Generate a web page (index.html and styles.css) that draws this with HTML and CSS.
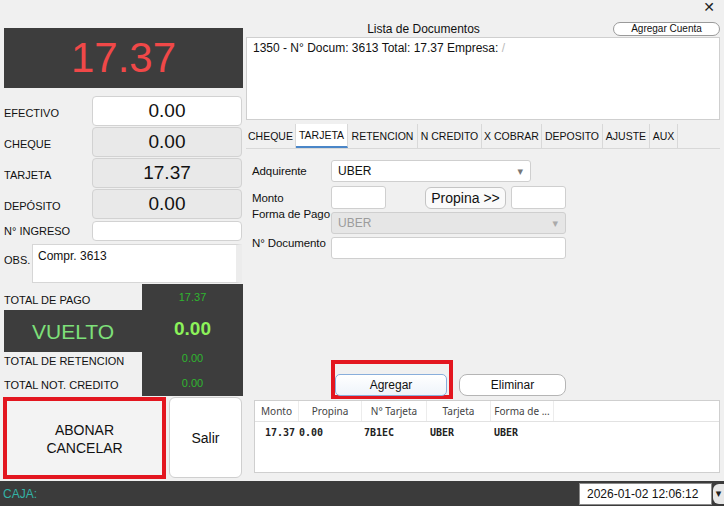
FILE: index.html
```html
<!DOCTYPE html>
<html lang="es">
<head>
<meta charset="utf-8">
<title>Cobro</title>
<link rel="stylesheet" href="styles.css">
</head>
<body>
<div class="app">
  <div class="main">
    <div class="left">
      <div class="amount">17.37</div>
      <div class="rows">
        <div class="row"><span class="lbl">EFECTIVO</span><div class="field white">0.00</div></div>
        <div class="row"><span class="lbl">CHEQUE</span><div class="field">0.00</div></div>
        <div class="row"><span class="lbl">TARJETA</span><div class="field">17.37</div></div>
        <div class="row"><span class="lbl">DEPÓSITO</span><div class="field">0.00</div></div>
        <div class="row small"><span class="lbl">N° INGRESO</span><div class="field white"></div></div>
        <div class="row obs"><span class="lbl obs-lbl">OBS.</span><div class="textarea">Compr. 3613</div></div>
      </div>
      <div class="totals">
        <div class="t-lbl t1">TOTAL DE PAGO</div>
        <div class="t-val t1v">17.37</div>
        <div class="vuelto">VUELTO</div>
        <div class="vuelto-val">0.00</div>
        <div class="t-lbl t3">TOTAL DE RETENCION</div>
        <div class="t-val t3v">0.00</div>
        <div class="t-lbl t4">TOTAL NOT. CREDITO</div>
        <div class="t-val t4v">0.00</div>
      </div>
      <div class="btns">
        <div class="redbox big"><div class="abonar">ABONAR<br>CANCELAR</div></div>
        <div class="salir">Salir</div>
      </div>
    </div>
    <div class="right">
      <div class="titlebar"><span class="close">✕</span></div>
      <div class="listhead">
        <span class="listtitle">Lista de Documentos</span>
        <span class="pill">Agregar Cuenta</span>
      </div>
      <div class="list">1350 - N° Docum: 3613 Total: 17.37 Empresa: <span class="redact">/</span></div>
      <div class="tabs">
        <span class="tab w50">CHEQUE</span>
        <span class="tab w52 active">TARJETA</span>
        <span class="tab w70">RETENCION</span>
        <span class="tab w64">N CREDITO</span>
        <span class="tab w60">X COBRAR</span>
        <span class="tab w61">DEPOSITO</span>
        <span class="tab w47">AJUSTE</span>
        <span class="tab w28">AUX</span>
      </div>
      <div class="form">
        <div class="frow r1"><span class="flbl">Adquirente</span><div class="select s200">UBER<span class="arrow">▾</span></div></div>
        <div class="frow r2"><span class="flbl">Monto</span><div class="input i55"></div><div class="propina">Propina &gt;&gt;</div><div class="input i55 ml5"></div></div>
        <div class="frow r3"><span class="flbl up">Forma de Pago</span><div class="select s235 disabled">UBER<span class="arrow">▾</span></div></div>
        <div class="frow r4"><span class="flbl up2">N° Documento</span><div class="input i235"></div></div>
      </div>
      <div class="actions">
        <div class="redbox small-box"><div class="agregar">Agregar</div></div>
        <div class="eliminar">Eliminar</div>
      </div>
      <div class="table">
        <div class="thead">
          <span class="c1">Monto</span><span class="c2">Propina</span><span class="c3">N° Tarjeta</span><span class="c4">Tarjeta</span><span class="c5">Forma de ...</span>
        </div>
        <div class="trow">
          <span class="c1 d">17.37</span><span class="c2 d">0.00</span><span class="c3 d">7B1EC</span><span class="c4 d">UBER</span><span class="c5 d">UBER</span>
        </div>
      </div>
    </div>
  </div>
  <div class="status">
    <span class="caja">CAJA:</span>
    <div class="date">2026-01-02 12:06:12</div>
    <div class="dd">▾</div>
  </div>
</div>
</body>
</html>
```
FILE: styles.css
```css
html, body {
  margin: 0;
  padding: 0;
}
body {
  background: #f0f0f0;
  font-family: "Liberation Sans", Arial, sans-serif;
  color: #111;
  width: 724px;
  height: 506px;
  overflow: hidden;
}
.app {
  display: flex;
  flex-direction: column;
  height: 506px;
}
.main {
  display: flex;
  height: 481px;
}
.left {
  width: 246px;
  padding-left: 4px;
  box-sizing: border-box;
  display: flex;
  flex-direction: column;
}
.amount {
  margin-top: 28px;
  width: 239px;
  height: 60px;
  background: #3d3d3d;
  color: #f04848;
  font-size: 42px;
  display: flex;
  align-items: center;
  justify-content: center;
}
.rows {
  margin-top: 8px;
  display: flex;
  flex-direction: column;
}
.row {
  display: flex;
  align-items: center;
  height: 30px;
  margin-bottom: 1px;
}
.lbl {
  width: 88px;
  font-size: 11px;
  color: #111;
  padding-top: 3px;
}
.field {
  width: 150px;
  height: 30px;
  box-sizing: border-box;
  border: 1px solid #d2d2d2;
  border-radius: 4px;
  background: #e9e9e9;
  font-size: 19px;
  display: flex;
  align-items: center;
  justify-content: center;
}
.field.white { background: #fff; }
.row.small {
  height: 20px;
  margin-top: 1px;
}
.row.small .lbl { padding-top: 0; }
.row.small .field { height: 20px; }
.row.obs {
  height: 39px;
  margin-top: 2px;
  align-items: center;
}
.obs-lbl { width: 28px; padding-top: 0; padding-bottom: 8px; }
.textarea {
  width: 210px;
  height: 39px;
  box-sizing: border-box;
  background: #fff;
  border: 1px solid #d6d6d6;
  border-right: 6px solid #ececec;
  font-size: 12px;
  padding: 4px 5px;
}
.totals {
  margin-top: 0;
  display: grid;
  grid-template-columns: 138px 101px;
  grid-template-rows: 26px 42px 20px 24px;
}
.t-lbl {
  font-size: 11px;
  display: flex;
  align-items: center;
}
.t1 { padding-top: 6px; }
.t3 { padding-top: 0; padding-bottom: 3px; }
.t4 { padding-top: 2px; }
.t-val {
  background: #3d3d3d;
  color: #2fb52f;
  font-size: 11px;
  display: flex;
  justify-content: center;
  align-items: center;
}
.t1v { align-items: flex-start; padding-top: 7px; }
.t3v { align-items: flex-start; padding-top: 0; }
.t4v { padding-bottom: 2px; }
.vuelto {
  background: #3d3d3d;
  color: #7ee07a;
  font-size: 21px;
  display: flex;
  align-items: center;
  justify-content: center;
  padding-top: 1px;
}
.vuelto-val {
  background: #3d3d3d;
  color: #8cf25a;
  font-size: 19px;
  font-weight: bold;
  display: flex;
  align-items: center;
  justify-content: center;
  padding-bottom: 4px;
}
.btns {
  margin-top: 1px;
  display: flex;
}
.redbox {
  border: 4px solid #e3161f;
  box-sizing: border-box;
}
.big {
  margin-left: -1px;
  width: 163px;
  height: 82px;
  display: flex;
}
.abonar {
  flex: 1;
  background: #f3f3f3;
  font-size: 14px;
  line-height: 18px;
  text-align: center;
  display: flex;
  align-items: center;
  justify-content: center;
  padding-top: 2px;
}
.salir {
  margin-left: 3px;
  width: 73px;
  height: 81px;
  box-sizing: border-box;
  background: #fff;
  border: 1px solid #cfcfcf;
  border-radius: 6px;
  font-size: 14px;
  display: flex;
  align-items: center;
  justify-content: center;
}
.right {
  flex: 1;
  display: flex;
  flex-direction: column;
}
.titlebar {
  height: 20px;
  display: flex;
  justify-content: flex-end;
  align-items: center;
  padding-right: 9px;
}
.close {
  font-size: 14px;
  color: #222;
  font-family: "DejaVu Sans", sans-serif;
  margin-top: -6px;
}
.listhead {
  height: 17px;
  display: flex;
  align-items: center;
}
.listtitle {
  flex: 1;
  text-align: center;
  font-size: 12px;
  padding-right: 12px;
  padding-top: 1px;
}
.pill {
  width: 107px;
  height: 14px;
  box-sizing: border-box;
  margin-right: 4px;
  border: 1px solid #9a9a9a;
  border-radius: 8px;
  background: #fff;
  font-size: 10px;
  text-align: center;
  line-height: 12px;
}
.list {
  width: 474px;
  height: 83px;
  box-sizing: border-box;
  background: #fff;
  border: 1px solid #cfcfcf;
  font-size: 12px;
  padding: 3px 6px;
}
.redact { color: #bbb; }
.tabs {
  margin-top: 4px;
  height: 24px;
  display: flex;
  border-bottom: 1px solid #d8d8d8;
  width: 474px;
}
.tab {
  font-size: 10.5px;
  display: flex;
  align-items: center;
  justify-content: center;
  border-right: 1px solid #d8d8d8;
  box-sizing: border-box;
  white-space: nowrap;
}
.tab.active {
  background: #fff;
  border-bottom: 2px solid #4a86c8;
}
.w50 { width: 50px; }
.w52 { width: 52px; }
.w70 { width: 70px; }
.w64 { width: 64px; }
.w60 { width: 60px; }
.w61 { width: 61px; }
.w47 { width: 47px; }
.w28 { width: 28px; }
.form {
  padding-left: 6px;
  display: flex;
  flex-direction: column;
}
.frow {
  display: flex;
  align-items: center;
}
.r1 { margin-top: 11px; height: 22px; }
.r2 { margin-top: 4px; height: 23px; }
.r3 { margin-top: 3px; height: 22px; }
.r4 { margin-top: 3px; height: 22px; }
.flbl {
  width: 79px;
  flex: none;
  font-size: 11.5px;
  white-space: nowrap;
  letter-spacing: -0.1px;
}
.flbl.up { align-self: flex-start; margin-top: -4px; }
.flbl.up2 { align-self: flex-start; margin-top: 0; }
.select, .input {
  height: 22px;
  box-sizing: border-box;
  background: #fff;
  border: 1px solid #cfcfcf;
  border-radius: 3px;
  font-size: 12px;
  display: flex;
  align-items: center;
  padding-left: 6px;
  position: relative;
}
.r2 .input { height: 23px; }
.s200 { width: 200px; }
.s235 { width: 235px; }
.i55 { width: 55px; }
.i235 { width: 235px; }
.ml5 { margin-left: 5px; }
.arrow {
  margin-left: auto;
  margin-right: 7px;
  color: #777;
  font-size: 11px;
  font-family: "DejaVu Sans", sans-serif;
}
.select.disabled {
  background: #e6e6e6;
  color: #9c9c9c;
}
.select.disabled .arrow { color: #aaa; }
.propina {
  margin-left: 39px;
  width: 81px;
  height: 22px;
  box-sizing: border-box;
  border: 1px solid #c4c4c4;
  border-radius: 6px;
  background: #fafafa;
  font-size: 14px;
  display: flex;
  align-items: center;
  justify-content: center;
}
.actions {
  margin-top: 101px;
  display: flex;
  align-items: flex-end;
}
.small-box {
  margin-left: 85px;
  width: 122px;
  height: 39px;
  display: flex;
  align-items: flex-end;
}
.agregar {
  width: 112px;
  height: 22px;
  box-sizing: border-box;
  margin-bottom: -1px;
  border: 1px solid #88aedb;
  border-radius: 5px;
  background: linear-gradient(#ffffff, #eef4fa);
  font-size: 12px;
  display: flex;
  align-items: center;
  justify-content: center;
}
.eliminar {
  margin-left: 6px;
  margin-bottom: 3px;
  width: 107px;
  height: 22px;
  box-sizing: border-box;
  border: 1px solid #b5b5b5;
  border-radius: 8px;
  background: #fff;
  font-size: 12px;
  display: flex;
  align-items: center;
  justify-content: center;
}
.table {
  margin-top: 1px;
  margin-left: 8px;
  width: 466px;
  height: 73px;
  box-sizing: border-box;
  background: #fff;
  border: 1px solid #cfcfcf;
}
.thead, .trow {
  display: flex;
}
.thead {
  height: 20px;
  border-bottom: 1px solid #e2e2e2;
  font-family: "Noto Sans", sans-serif;
  font-size: 10px;
  color: #444;
}
.thead span {
  display: flex;
  align-items: center;
  justify-content: center;
  border-right: 1px solid #ececec;
  box-sizing: border-box;
}
.c1 { width: 44px; }
.c2 { width: 63px; }
.c3 { width: 65px; }
.c4 { width: 64px; }
.c5 { width: 63px; }
.trow {
  height: 20px;
  align-items: center;
  font-family: "DejaVu Sans Mono", monospace;
  font-weight: bold;
  font-size: 10px;
  color: #222;
}
.trow .c1 { padding-left: 10px; box-sizing: border-box; width: 44px; }
.trow .c2 { padding-left: 0; width: 64px; }
.trow .c3 { padding-left: 1px; width: 65px; }
.trow .c4 { padding-left: 1px; width: 64px; }
.status {
  height: 25px;
  background: #3b3b3b;
  display: flex;
  align-items: center;
}
.caja {
  margin-left: 3px;
  color: #33b3a6;
  font-size: 12px;
  margin-top: 1px;
}
.date {
  margin-left: auto;
  width: 133px;
  height: 22px;
  box-sizing: border-box;
  background: #fff;
  border: 1px solid #8a8a8a;
  font-size: 12px;
  display: flex;
  align-items: center;
  padding-left: 7px;
}
.dd {
  width: 11px;
  height: 20px;
  margin-right: 0;
  margin-left: 1px;
  background: #e8e8e8;
  border-radius: 6px 0 0 6px;
  color: #222;
  font-size: 11px;
  display: flex;
  align-items: center;
  justify-content: center;
  font-family: "DejaVu Sans", sans-serif;
}
```
